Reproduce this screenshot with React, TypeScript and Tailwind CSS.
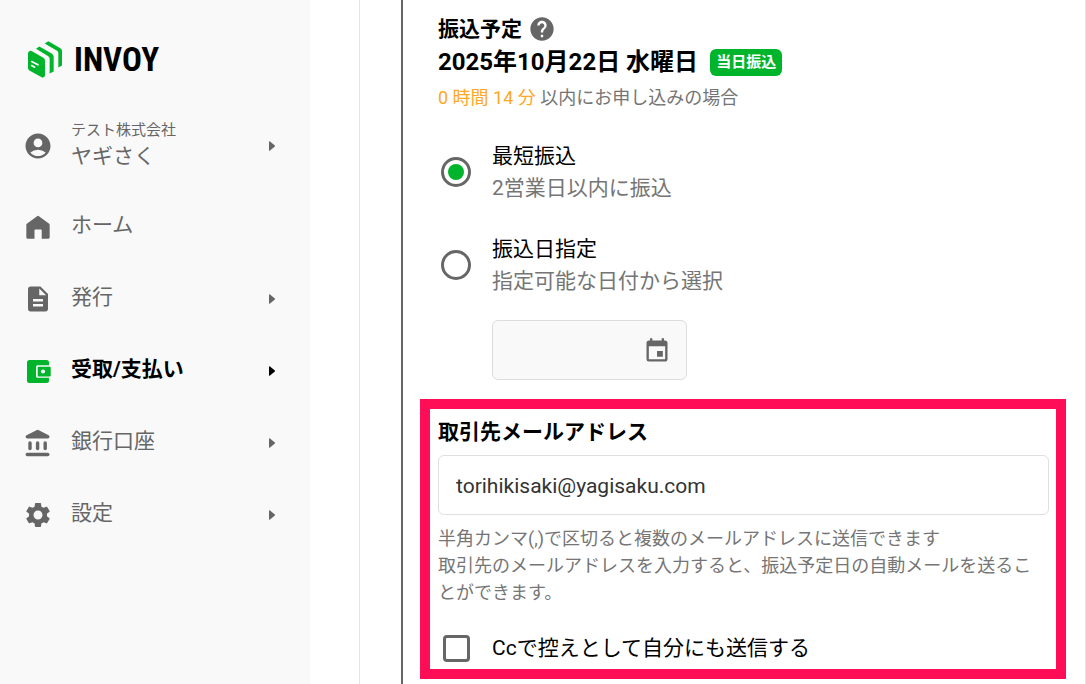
import React, { useState } from "react";
import {
  MdAccountCircle,
  MdDescription,
  MdEvent,
  MdHelp,
  MdSettings,
} from "react-icons/md";

function LogoMark() {
  return (
    <svg viewBox="84 62 102 110" className="h-[37px] w-[34px]" aria-hidden="true">
      <g fill="#00b52b">
        <path d="M84 99q0-4 3-6l4-2q2-1 5 1l34 20q5 3 5 8v45q0 3-2 4l-5 3-40-22q-4-3-4-8z" />
        <path d="M108 85l10-7 37 21q6 4 6 9v45l-12 6v-44q0-5-4-8z" />
        <path d="M134 69l11-7 36 21q5 3 5 8v44l-11 6V98q0-5-4-7z" />
      </g>
      <path
        d="M95 123l19 10M95 135l9 5"
        stroke="#fff"
        strokeWidth="5"
        strokeLinecap="round"
      />
    </svg>
  );
}

function HomeIcon() {
  return (
    <svg viewBox="0 0 24 24" fill="currentColor" className="size-7">
      <path d="M2 10.2q0-.8.7-1.2l8.5-6.3q.8-.6 1.6 0L21.3 9q.7.4.7 1.2V21q0 1-1 1h-5.800v-7.2q0-.6-.6-.6H9.600q-.6 0-.6.6V22H3q-1 0-1-1z" />
    </svg>
  );
}

function WalletIcon() {
  return (
    <svg viewBox="0 0 28 28" fill="none" className="size-7">
      <rect x="3" y="3" width="22" height="23" rx="2.5" fill="#00b52b" />
      <path d="M13.5 8.3H28v12.4H13.500q-1.500 0-1.500-1.500V9.800q0-1.500 1.500-1.500z" fill="#f9f9f9" />
      <rect x="13.700" y="9.800" width="13" height="9.600" rx="1" fill="#00b52b" />
      <circle cx="19" cy="14.500" r="2.100" fill="#f9f9f9" />
    </svg>
  );
}

function BankIcon() {
  return (
    <svg viewBox="0 0 28 28" fill="currentColor" className="size-7">
      <path d="M12.500 1.200q1.200-.7 2.400 0l9.700 5q.9.500.9 1.600 0 1.800-1.700 1.800H3.400q-1.800 0-1.800-1.800 0-1.100.9-1.600z" />
      <rect x="4.300" y="12.200" width="3.400" height="9" rx="1.700" />
      <rect x="11.900" y="12.200" width="3.400" height="9" rx="1.700" />
      <rect x="19.500" y="12.200" width="3.400" height="9" rx="1.700" />
      <rect x="1.600" y="23.700" width="23.900" height="3.500" rx="1.750" />
    </svg>
  );
}

function Arrow() {
  return (
    <svg viewBox="0 0 6 10" fill="currentColor" className="h-2.5 w-1.5">
      <path d="M0 1Q0-.3 1 .4L5.600 4.300Q6.300 5 5.600 5.700L1 9.600Q0 10.300 0 9z" />
    </svg>
  );
}

const items = [
  { label: "ホーム", icon: <HomeIcon /> },
  { label: "発行", icon: <MdDescription className="-mx-px size-7.5" />, menu: true },
  { label: "受取/支払い", icon: <WalletIcon />, menu: true, active: true },
  { label: "銀行口座", icon: <BankIcon />, menu: true },
  { label: "設定", icon: <MdSettings className="-mx-px size-7.5" />, menu: true },
];

function Sidebar() {
  return (
    <aside className="w-[310px] shrink-0 bg-[#f9f9f9] text-[#666]">
      <a href="#" className="flex items-center gap-3 pt-[41px] pl-7 text-black">
        <LogoMark />
        <span className="font-['Liberation_Sans_Narrow','Roboto_Condensed',Roboto,sans-serif] text-[33px] leading-9 font-bold">
          INVOY
        </span>
      </a>
      <nav className="pt-8">
        <button className="flex h-[72px] w-full items-center pr-[35px] pl-6 text-left">
          <MdAccountCircle className="-mx-px size-7.5 shrink-0" />
          <span className="ml-[19px] flex-1 pb-1">
            <span className="block text-[15px] leading-6">テスト株式会社</span>
            <span className="block text-[21px] leading-7">ヤギさく</span>
          </span>
          <Arrow />
        </button>
        <ul className="pt-[9px]">
          {items.map((item) => {
            const content = (
              <>
                {item.icon}
                <span className="ml-[19px] flex-1 pb-0.5">{item.label}</span>
                {item.menu && <Arrow />}
              </>
            );
            const className = `flex h-[72px] w-full items-center pr-[35px] pl-6 text-left text-[21px] ${
              item.active ? "font-bold text-black" : ""
            }`;
            return (
              <li key={item.label}>
                {item.menu ? (
                  <button className={className}>{content}</button>
                ) : (
                  <a href="#" className={className}>
                    {content}
                  </a>
                )}
              </li>
            );
          })}
        </ul>
      </nav>
    </aside>
  );
}

function RadioOption({
  title,
  note,
  checked,
  onChange,
}: {
  title: string;
  note: string;
  checked: boolean;
  onChange: () => void;
}) {
  return (
    <label className="flex items-center gap-[21px] pl-[3px] text-[21px] leading-8">
      <input
        type="radio"
        name="transfer"
        checked={checked}
        onChange={onChange}
        className="grid size-[30px] shrink-0 appearance-none place-items-center rounded-full border-3 border-[#666] before:size-4 before:rounded-full checked:before:bg-[#00b52b]"
      />
      <span>
        <span className="block">{title}</span>
        <span className="block text-[#757575]">{note}</span>
      </span>
    </label>
  );
}

export default function App() {
  const [method, setMethod] = useState("fastest");
  const [email, setEmail] = useState("torihikisaki@yagisaku.com");
  const [cc, setCc] = useState(false);

  return (
    <div className="flex min-h-screen bg-white font-[Roboto,'Noto_Sans_CJK_JP',sans-serif] text-black" lang="ja">
      <Sidebar />
      <main className="ml-[49px] flex flex-1 border-x border-[#e4e4e4] pl-[41px]">
        <div className="flex-1 border-l-2 border-[#666] pr-[19px] pl-[17px]">
          <section className="px-[18px] pt-3">
            <h2 className="flex items-center gap-1.5 text-[21px] leading-[34px] font-bold">
              振込予定
              <button aria-label="ヘルプ" className="text-[#666]">
                <MdHelp className="size-7" />
              </button>
            </h2>
            <div className="flex items-center gap-3">
              <p className="text-2xl leading-8 font-bold">2025年10月22日 水曜日</p>
              <span className="rounded-md bg-[#00b52b] px-1.5 text-[15px] leading-[27px] font-bold text-white">
                当日振込
              </span>
            </div>
            <p className="pt-1.5 text-lg leading-[27px] text-[#757575]">
              <span className="text-[#ffa726]">0 時間 14 分</span> 以内にお申し込みの場合
            </p>
            <div className="flex flex-col gap-[29px] pt-[29px]">
              <RadioOption
                title="最短振込"
                note="2営業日以内に振込"
                checked={method === "fastest"}
                onChange={() => setMethod("fastest")}
              />
              <RadioOption
                title="振込日指定"
                note="指定可能な日付から選択"
                checked={method === "date"}
                onChange={() => setMethod("date")}
              />
            </div>
            <div className="mt-[23px] ml-[54px] flex h-[60px] w-[195px] items-center rounded-md border border-[#dcdcdc] bg-[#f9f9f9] pt-0.5 pr-[15px] pl-4">
              <input
                aria-label="振込日"
                readOnly
                disabled={method !== "date"}
                className="w-full min-w-0 text-[21px] outline-none"
              />
              <MdEvent className="size-7 shrink-0 text-[#666]" />
            </div>
          </section>

          <section className="mt-[19px] border-10 border-[#ff0d57] pt-2 pr-[7px] pb-[5px] pl-2">
            <label htmlFor="email" className="block text-[21px] leading-[30px] font-bold">
              取引先メールアドレス
            </label>
            <input
              id="email"
              type="email"
              value={email}
              onChange={(e) => setEmail(e.target.value)}
              className="mt-2 block h-[60px] w-full rounded-md border border-[#dfdfdf] px-[17px] pt-0.5 text-[21px] text-[#333] outline-none"
            />
            <p className="pt-[10px] text-lg leading-[27px] text-[#757575]">
              半角カンマ(,)で区切ると複数のメールアドレスに送信できます
              <br />
              取引先のメールアドレスを入力すると、振込予定日の自動メールを送ることができます。
            </p>
            <label className="mt-[26px] flex items-center gap-[22px] pl-[5px] text-[21px] leading-8">
              <input
                type="checkbox"
                checked={cc}
                onChange={(e) => setCc(e.target.checked)}
                className="size-[27px] shrink-0 appearance-none rounded-sm border-3 border-[#666] checked:bg-[#00b52b]"
              />
              Ccで控えとして自分にも送信する
            </label>
          </section>
        </div>
      </main>
    </div>
  );
}
